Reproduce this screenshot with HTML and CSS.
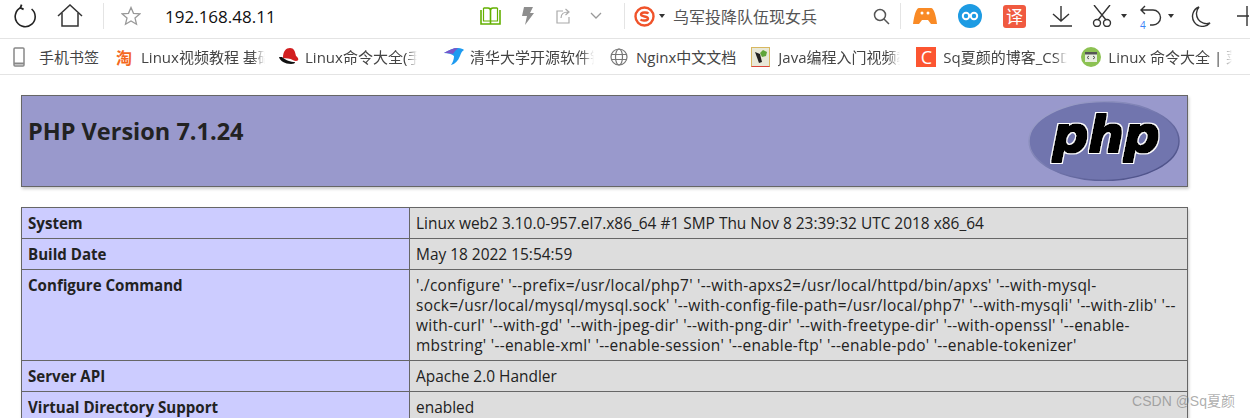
FILE: index.html
```html
<!DOCTYPE html>
<html lang="zh">
<head>
	<meta charset="utf-8">
	<title>phpinfo()</title>
	<link rel="stylesheet" href="styles.css">
</head>
<body>
	<div id="toolbar">
		<svg class="ic reload" width="24" height="24" viewBox="0 0 24 24" fill="none" stroke="#222" stroke-width="1.6"><path d="M8 3.6A10 10 0 1 0 18.6 5"/><path d="M8.6 0.6 7.4 3.8l3.2 1.6" stroke-width="1.8"/></svg>
		<svg class="ic home" width="26" height="24" viewBox="0 0 26 24" fill="none" stroke="#333" stroke-width="1.5"><path d="M1 12 13 1l12 11"/><path d="M5 9v13h16V9"/></svg>
		<span class="vline v1"></span>
		<svg class="ic star" width="20" height="20" viewBox="0 0 20 20" fill="none" stroke="#999" stroke-width="1.3"><path d="M10 1.5l2.5 5.8 6.3.6-4.8 4.1 1.5 6.2-5.5-3.3-5.5 3.3L6 12 1.2 7.900l6.300-.6z"/></svg>
		<span class="url">192.168.48.11</span>
		<svg class="ic book" width="21" height="18" viewBox="0 0 21 18" fill="none" stroke="#63b000" stroke-width="1.6"><path d="M1 3v14h19V3"/><path d="M3.500 1H8c1.500 0 2.500 1 2.500 2.500V17M17.500 1H13c-1.500 0-2.500 1-2.500 2.500"/><path d="M3.500 1v13h7M17.500 1v13h-7" stroke-width="1.200"/></svg>
		<svg class="ic flash" width="12" height="18" viewBox="0 0 12 18" fill="#8e8e8e"><path d="M2 0h9L8 6h4L3 18l2-9H0z"/></svg>
		<svg class="ic share" width="16" height="16" viewBox="0 0 16 16" fill="none" stroke="#aaa" stroke-width="1.2"><path d="M7 3H1v12h12V9"/><path d="M5 10c0-4 3-6 7-6M9.500 1 13 4 9.500 7"/></svg>
		<svg class="ic chev" width="12" height="8" viewBox="0 0 12 8" fill="none" stroke="#999" stroke-width="1.3"><path d="M1 1l5 5 5-5"/></svg>
		<span class="vline v2"></span>
		<svg class="ic sogou" width="21" height="21" viewBox="0 0 21 21"><circle cx="10.500" cy="10.500" r="9" fill="#fff" stroke="#f0532a" stroke-width="2.4"/><path d="M14.500 7.500C13 6 7 6 7 8.500s7 1.500 7 4-6 2.500-7.500 1" fill="none" stroke="#f0532a" stroke-width="2.400"/></svg>
		<span class="caret c1"></span>
		<span class="search-text">乌军投降队伍现女兵</span>
		<svg class="ic mag" width="17" height="17" viewBox="0 0 17 17" fill="none" stroke="#555" stroke-width="1.5"><circle cx="7" cy="7" r="5.500"/><path d="M11 11l5 5"/></svg>
		<span class="vline v3"></span>
		<svg class="ic game" width="24" height="16" viewBox="0 0 24 16"><path d="M6 0h12c3 0 5 8 6 16h-6l-3-4H9l-3 4H0C1 8 3 0 6 0z" fill="#f98a25"/><circle cx="9" cy="5" r="1.500" fill="#fff"/><circle cx="15" cy="5" r="1.500" fill="#fff"/></svg>
		<svg class="ic inf" width="24" height="24" viewBox="0 0 24 24"><circle cx="12" cy="12" r="12" fill="#1d9be3"/><circle cx="8" cy="12" r="3.200" fill="none" stroke="#fff" stroke-width="2"/><circle cx="16" cy="12" r="3.200" fill="none" stroke="#fff" stroke-width="2"/></svg>
		<span class="ic yi">译</span>
		<svg class="ic down" width="22" height="21" viewBox="0 0 22 21" fill="none" stroke="#333" stroke-width="1.4"><path d="M11 0v15M3 8l8 7 8-7M0 20h22"/></svg>
		<svg class="ic cut" width="20" height="22" viewBox="0 0 20 22" fill="none" stroke="#333" stroke-width="1.400"><path d="M2 0l12 15M18 0 6 15"/><circle cx="5" cy="18" r="3.500"/><circle cx="15" cy="18" r="3.500"/></svg>
		<span class="caret c2"></span>
		<span class="undo-wrap">
			<svg width="22" height="22" viewBox="0 0 22 22" fill="none" stroke="#333" stroke-width="1.400"><path d="M1 5h12a7.500 7.500 0 0 1 0 15h-3M5 1 1 5l4 4"/></svg>
			<span class="undo-count">4</span>
		</span>
		<span class="caret c3"></span>
		<svg class="ic moon" width="20" height="21" viewBox="0 0 20 21" fill="none" stroke="#333" stroke-width="1.400"><path d="M8 1a10 10 0 0 0 11 16A10 10 0 1 1 8 1z"/></svg>
		<svg class="ic plus" width="12" height="20" viewBox="0 0 12 20" fill="none" stroke="#333" stroke-width="1.400"><path d="M0 10h12M10 0v20"/></svg>
	</div>

	<div id="bookmarks">
		<div class="bm b-phone">
			<svg width="12" height="20" viewBox="0 0 12 20" fill="none" stroke="#888" stroke-width="1.500"><rect x="1" y="1" width="10" height="18" rx="1"/><path d="M1 16.500h10" stroke-width="2"/></svg>
			<span class="bm-title">手机书签</span>
		</div>
		<div class="bm b-tao">
			<span class="tao">淘</span>
			<span class="bm-title fade">Linux视频教程 基础</span>
		</div>
		<div class="bm b-hat">
			<svg width="20" height="20" viewBox="0 0 20 20"><path d="M4 11C4 4 7 1 11 1s5 3 6 8c3 2 3 5 0 5-2 0-4-2-8-2.500z" fill="#d21f20"/><path d="M0 10c1 4 6 7 12 7 3 0 4-1 4-2-4 0-10-2-13-5z" fill="#111"/></svg>
			<span class="bm-title fade">Linux命令大全(手册</span>
		</div>
		<div class="bm b-bird">
			<svg width="20" height="18" viewBox="0 0 20 18"><path d="M0 5C5 2 9 0 14 0c3 0 5 1 6 2-2 1-3 3-4 6-2 5-5 8-9 9 2-3 3-6 3-9C8 6 4 5 0 5z" fill="#1e9bf0"/><path d="M0 5C5 2 9 0 14 0c-2 2-4 4-5 6C6 5 3 5 0 5z" fill="#7a55c8"/></svg>
			<span class="bm-title fade">清华大学开源软件镜</span>
		</div>
		<div class="bm b-globe">
			<svg width="18" height="18" viewBox="0 0 18 18" fill="none" stroke="#777" stroke-width="1.200"><circle cx="9" cy="9" r="8"/><ellipse cx="9" cy="9" rx="3.500" ry="8"/><path d="M1 6.500h16M1 11.500h16"/></svg>
			<span class="bm-title">Nginx中文文档</span>
		</div>
		<div class="bm b-java">
			<svg width="19" height="20" viewBox="0 0 19 20"><rect x=".5" y=".5" width="18" height="19" fill="#e8e8d8" stroke="#d8b860"/><path d="M.5 19.500h18" stroke="#d9453a"/><path d="M4 5l4 11 3-1-2-8z" fill="#222"/><path d="M9 6l3-3 4 2-1 4-4 1z" fill="#5fa53a"/></svg>
			<span class="bm-title fade">Java编程入门视频教</span>
		</div>
		<div class="bm b-csdn">
			<span class="csdn">C</span>
			<span class="bm-title fade">Sq夏颜的博客_CSDN</span>
		</div>
		<div class="bm b-linux">
			<svg width="20" height="20" viewBox="0 0 20 20"><circle cx="10" cy="10" r="10" fill="#8cc152"/><rect x="4" y="5" width="12" height="10" fill="#e8eee0"/><path d="M4 5h12v2.500H4z" fill="#555"/><path d="M8 9l-2 1.500L8 12M12 9l2 1.500L12 12" stroke="#555" fill="none"/></svg>
			<span class="bm-title fade">Linux 命令大全 | 菜鸟</span>
		</div>
	</div>

	<div id="page">
		<div class="php-head">
			<h1>PHP Version 7.1.24</h1>
			<svg class="php-logo" width="152" height="80" viewBox="0 0 152 80">
				<defs>
					<linearGradient id="rim" x1="0" y1="0" x2="1" y2="1">
						<stop offset="0" stop-color="#a9abd2"/>
						<stop offset=".5" stop-color="#7377ad"/>
						<stop offset="1" stop-color="#40447c"/>
					</linearGradient>
					<filter id="fat" x="-10%" y="-10%" width="120%" height="120%">
						<feMorphology in="SourceAlpha" operator="dilate" radius="0.7" result="ink"/>
						<feMorphology in="SourceAlpha" operator="dilate" radius="1.7" result="edge"/>
						<feFlood flood-color="#fff"/>
						<feComposite in2="edge" operator="in" result="halo"/>
						<feMerge>
							<feMergeNode in="halo"/>
							<feMergeNode in="ink"/>
						</feMerge>
					</filter>
				</defs>
				<ellipse cx="76" cy="40" rx="75" ry="39.500" fill="#7175ae" stroke="url(#rim)" stroke-width="1.500"/>
				<text class="php-word" x="78" y="51" filter="url(#fat)">php</text>
			</svg>
		</div>

		<table class="info">
			<tr><td class="e">System</td><td class="v">Linux web2 3.10.0-957.el7.x86_64 #1 SMP Thu Nov 8 23:39:32 UTC 2018 x86_64</td></tr>
			<tr><td class="e">Build Date</td><td class="v">May 18 2022 15:54:59</td></tr>
			<tr><td class="e">Configure Command</td><td class="v cmd">'./configure' '--prefix=/usr/local/php7' '--with-apxs2=/usr/local/httpd/bin/apxs' '--with-mysql-sock=/usr/local/mysql/mysql.sock' '--with-config-file-path=/usr/local/php7' '--with-mysqli' '--with-zlib' '--with-curl' '--with-gd' '--with-jpeg-dir' '--with-png-dir' '--with-freetype-dir' '--with-openssl' '--enable-mbstring' '--enable-xml' '--enable-session' '--enable-ftp' '--enable-pdo' '--enable-tokenizer'</td></tr>
			<tr><td class="e">Server API</td><td class="v">Apache 2.0 Handler</td></tr>
			<tr><td class="e">Virtual Directory Support</td><td class="v">enabled</td></tr>
		</table>
	</div>

	<div class="watermark">CSDN @Sq夏颜</div>
</body>
</html>
```

FILE: styles.css
```css
html, body {
	margin: 0;
	height: 418px;
	overflow: hidden;
	background: #fff;
}
body {
	font-family: "Open Sans", "Noto Sans CJK SC", sans-serif;
	color: #222;
	position: relative;
}

/* top browser bar */
#toolbar {
	display: flex;
	align-items: center;
	box-sizing: content-box;
	height: 32px;
	padding-bottom: 6px;
	border-bottom: 1px solid #e4e4e4;
	white-space: nowrap;
}
.ic {
	flex: none;
}
.vline {
	flex: none;
	width: 1px;
	height: 26px;
	background: #e4e4e4;
}
.caret {
	flex: none;
	width: 0;
	height: 0;
	border: 3.5px solid transparent;
	border-top: 4px solid #333;
	border-bottom: none;
}
.reload { margin-left: 13px; }
.home { margin-left: 20px; }
.v1 { margin-left: 20px; }
.star { margin-left: 17px; }
.url {
	margin-left: 24px;
	width: 315px;
	font-size: 17px;
	color: #111;
}
.book { margin-left: 0; }
.flash { margin-left: 21px; }
.share { margin-left: 22px; }
.chev { margin-left: 18px; }
.v2 { margin-left: 22px; }
.sogou { margin-left: 9px; }
.c1 { margin-left: 4px; }
.search-text {
	margin-left: 8px;
	width: 200px;
	font-size: 16px;
	color: #555;
}
.v3 { margin-left: 10px; }
.game { margin-left: 12px; }
.inf { margin-left: 21px; }
.yi {
	margin-left: 21px;
	width: 23px;
	height: 23px;
	border-radius: 3px;
	background: #f05a40;
	color: #fff;
	font-size: 17px;
	line-height: 23px;
	text-align: center;
}
.down { margin-left: 24px; }
.cut { margin-left: 20px; }
.c2 { margin-left: 9px; }
.undo-wrap {
	flex: none;
	position: relative;
	margin-left: 13px;
	height: 22px;
}
.undo-count {
	position: absolute;
	left: 0;
	top: 13px;
	font-size: 10px;
	color: #3b82f6;
}
.c3 { margin-left: 6px; }
.moon { margin-left: 17px; }
.plus { margin-left: 26px; }

/* bookmarks */
#bookmarks {
	display: flex;
	align-items: center;
	height: 35px;
	border-bottom: 1px solid #e4e4e4;
	white-space: nowrap;
	overflow: hidden;
}
.bm {
	flex: none;
	display: flex;
	align-items: center;
	gap: 7px;
	font-size: 15px;
	color: #444;
}
.bm svg {
	flex: none;
}
.bm-title {
	display: block;
	overflow: hidden;
}
.fade {
	-webkit-mask-image: linear-gradient(to right, #000 90%, transparent);
	mask-image: linear-gradient(to right, #000 90%, transparent);
}
.tao {
	color: #f4681e;
	font-size: 16px;
	font-weight: bold;
}
.csdn {
	width: 20px;
	height: 20px;
	background: #fc5531;
	color: #fff;
	font-size: 18px;
	line-height: 20px;
	text-align: center;
}
.b-phone { margin-left: 13px; gap: 14px; }
.b-tao { margin-left: 17px; gap: 9px; }
.b-tao .bm-title { width: 124px; }
.b-hat { margin-left: 14px; gap: 6px; }
.b-hat .bm-title { width: 112px; }
.b-bird { margin-left: 27px; gap: 6px; }
.b-bird .bm-title { width: 124px; }
.b-globe { margin-left: 16px; gap: 8px; }
.b-java { margin-left: 15px; gap: 8px; }
.b-java .bm-title { width: 122px; }
.b-csdn { margin-left: 16px; }
.b-csdn .bm-title { width: 124px; }
.b-linux { margin-left: 14px; }
.b-linux .bm-title { width: 124px; }

/* phpinfo page */
#page {
	padding: 20px 62px 0 21px;
}
.php-head {
	display: flex;
	justify-content: space-between;
	height: 90px;
	background: #9999cc;
	border: 1px solid #666;
	box-shadow: 1px 2px 3px #ccc;
}
.php-head h1 {
	margin: 19px 0 0 6px;
	font-size: 23.5px;
	line-height: 32px;
	font-weight: bold;
	color: #222;
}
.php-logo {
	margin: 5px 7px 0 0;
}
.php-word {
	font-family: "DejaVu Sans", sans-serif;
	font-size: 50px;
	font-weight: bold;
	font-style: italic;
	text-anchor: middle;
	fill: #000;
}
.info {
	width: 100%;
	margin-top: 20px;
	border-collapse: collapse;
	table-layout: fixed;
	box-shadow: 1px 2px 3px #ccc;
	font-size: 15.45px;
	line-height: 20px;
}
.info td {
	border: 1px solid #666;
	padding: 5px 6px;
	vertical-align: baseline;
	word-break: break-word;
}
.info .e {
	width: 375px;
	background: #ccccff;
	font-size: 15.1px;
	font-weight: bold;
	color: #222;
}
.info .v {
	background: #dddddd;
	color: #222;
}
.info .cmd {
	letter-spacing: .27px;
}

.watermark {
	position: absolute;
	right: 15px;
	bottom: 8px;
	font-family: "Liberation Sans", "Noto Sans CJK SC", sans-serif;
	font-size: 14px;
	color: rgba(120, 120, 120, 0.6);
}
```
